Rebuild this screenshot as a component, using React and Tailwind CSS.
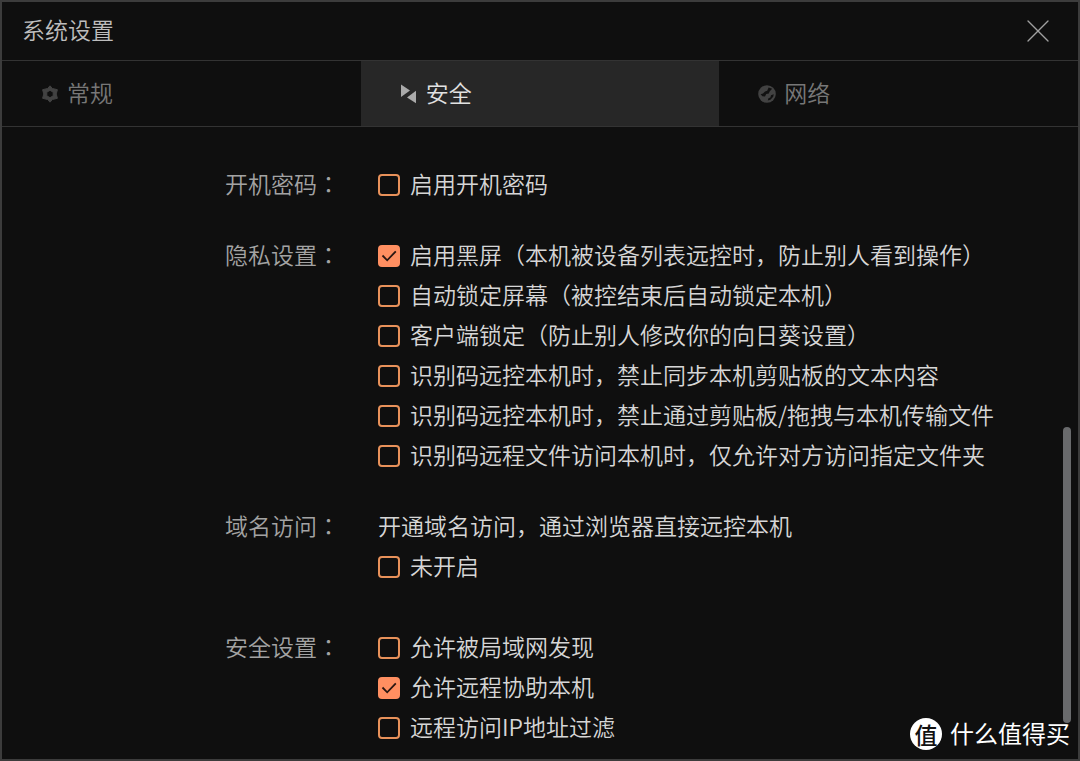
import { useState } from 'react';
import { X } from 'lucide-react';

const GearIcon = () => (
  <svg viewBox="0 0 18 18" className="w-[18px] h-[18px]" aria-hidden="true">
    <path
      fill="currentColor"
      fillRule="evenodd"
      stroke="currentColor"
      strokeLinejoin="round"
      d="M9 .8l2.4 2.7 5 1.2L15.2 9l1.2 4.3-5 1.2L9 17.2l-2.4-2.7-5-1.2L2.8 9 1.6 4.700l5-1.2zM9 5.300L5.800 7.200v3.600L9 12.700l3.200-1.900V7.200z"
    />
  </svg>
);

const ArrowsIcon = () => (
  <svg viewBox="0 0 18 18" className="w-[18px] h-[20px]" fill="currentColor" aria-hidden="true">
    <path d="M1 -.5v12.400L10 5.500z" />
    <path d="M16 5.800v12.400L7 12.500z" />
  </svg>
);

const GlobeIcon = () => (
  <svg viewBox="0 0 18 18" className="w-[18px] h-[18px]" aria-hidden="true">
    <circle cx="9" cy="9" r="8.8" fill="currentColor" />
    <path
      fill="#111"
      d="M10.600 2.400l3.600 1.400-2.400 2.400-1 2.200-2.600.6-1.200 2.600-2.600-.4-1.800-2 2.400-.8 2-2 2.200-.6zM15.800 9.200l-.6 2.600-2.800 3-2.600.8.600-2.400 2-.6.6-2.400z"
    />
  </svg>
);

const tabs = [
  { id: 'general', label: '常规', icon: GearIcon },
  { id: 'security', label: '安全', icon: ArrowsIcon },
  { id: 'network', label: '网络', icon: GlobeIcon },
];

const groups = [
  {
    title: '开机密码',
    options: [{ id: 'boot-password', label: '启用开机密码' }],
  },
  {
    title: '隐私设置',
    options: [
      { id: 'black-screen', label: '启用黑屏（本机被设备列表远控时，防止别人看到操作）', checked: true },
      { id: 'auto-lock', label: '自动锁定屏幕（被控结束后自动锁定本机）' },
      { id: 'client-lock', label: '客户端锁定（防止别人修改你的向日葵设置）' },
      { id: 'no-clipboard', label: '识别码远控本机时，禁止同步本机剪贴板的文本内容' },
      { id: 'no-transfer', label: '识别码远控本机时，禁止通过剪贴板/拖拽与本机传输文件' },
      { id: 'folder-only', label: '识别码远程文件访问本机时，仅允许对方访问指定文件夹' },
    ],
  },
  {
    title: '域名访问',
    note: '开通域名访问，通过浏览器直接远控本机',
    options: [{ id: 'domain', label: '未开启' }],
  },
  {
    title: '安全设置',
    options: [
      { id: 'lan', label: '允许被局域网发现' },
      { id: 'assist', label: '允许远程协助本机', checked: true },
      { id: 'ip-filter', label: '远程访问IP地址过滤' },
    ],
  },
];

const Option = ({ id, label, checked = false }) => {
  const [on, setOn] = useState(checked);

  return (
    <div className="flex items-center h-10">
      <span className="relative flex w-[22px] h-[22px] shrink-0">
        <input
          id={id}
          type="checkbox"
          checked={on}
          onChange={(e) => setOn(e.target.checked)}
          className="peer appearance-none w-full h-full rounded border-2 border-[#e8915a] checked:border-[#ff8f61] checked:bg-[#ff8f61]"
        />
        <svg
          viewBox="0 0 22 22"
          className="absolute inset-0 hidden peer-checked:block pointer-events-none"
          fill="none"
          stroke="#2a1712"
          strokeWidth="1.8"
          aria-hidden="true"
        >
          <path d="M4.5 10.5l4.7 4.8 8.6-9" />
        </svg>
      </span>
      <label htmlFor={id} className="pl-2.5 pb-1 whitespace-nowrap">
        {label}
      </label>
    </div>
  );
};

export default function App() {
  const [active, setActive] = useState('security');

  return (
    <div className="relative flex flex-col min-h-screen bg-[#0f0f0f] border-2 border-[#3c3c3c] font-['Noto_Sans_CJK_SC',sans-serif] font-[350] text-[23px] leading-9 text-[#d6d6d6]">
      <header className="flex items-center justify-between h-[58px] px-5">
        <h1 className="pb-1 text-[#bdbdbd]">系统设置</h1>
        <button type="button" aria-label="关闭" className="text-[#a0a0a0]">
          <X className="w-10 h-10" strokeWidth={0.8} />
        </button>
      </header>

      <nav role="tablist" className="grid grid-cols-3 h-[67px] border-y border-[#333]">
        {tabs.map(({ id, label, icon: Icon }) => (
          <button
            key={id}
            type="button"
            role="tab"
            aria-selected={active === id}
            onClick={() => setActive(id)}
            className={`flex items-center gap-2 pl-[39px] ${
              active === id ? 'bg-[#272727] text-[#e2e2e2]' : 'text-[#777]'
            }`}
          >
            <span className={active === id ? 'text-[#aaa]' : 'text-[#424242]'}>
              <Icon />
            </span>
            <span className="pb-1">{label}</span>
          </button>
        ))}
      </nav>

      <main className="flex flex-col gap-[31px] pt-[38px] pl-[223px]">
        {groups.map(({ title, note, options }) => (
          <section key={title} className={`flex ${note ? 'pb-2.5' : ''}`}>
            <h2 className="w-[153px] shrink-0 text-[#a3a3a3]">
              {title}
              {/* The JP face centres the colon in its cell */}
              <span className="font-['Noto_Sans_CJK_JP',sans-serif]">：</span>
            </h2>
            <div>
              {note && <p className="h-10 whitespace-nowrap">{note}</p>}
              {options.map((option) => (
                <Option key={option.id} {...option} />
              ))}
            </div>
          </section>
        ))}
      </main>

      {/* Scrollbar thumb */}
      <div className="absolute right-[7px] bottom-9 w-2 h-[296px] rounded-full bg-[#696a6c]"></div>

      {/* Site badge */}
      <div className="absolute right-2 bottom-2 flex items-center gap-2 font-normal text-2xl leading-8 text-white">
        <span className="flex items-center justify-center w-8 h-8 rounded-full bg-white text-[#111] text-[23px] font-medium">
          值
        </span>
        <span className="pb-0.5">什么值得买</span>
      </div>
    </div>
  );
}
